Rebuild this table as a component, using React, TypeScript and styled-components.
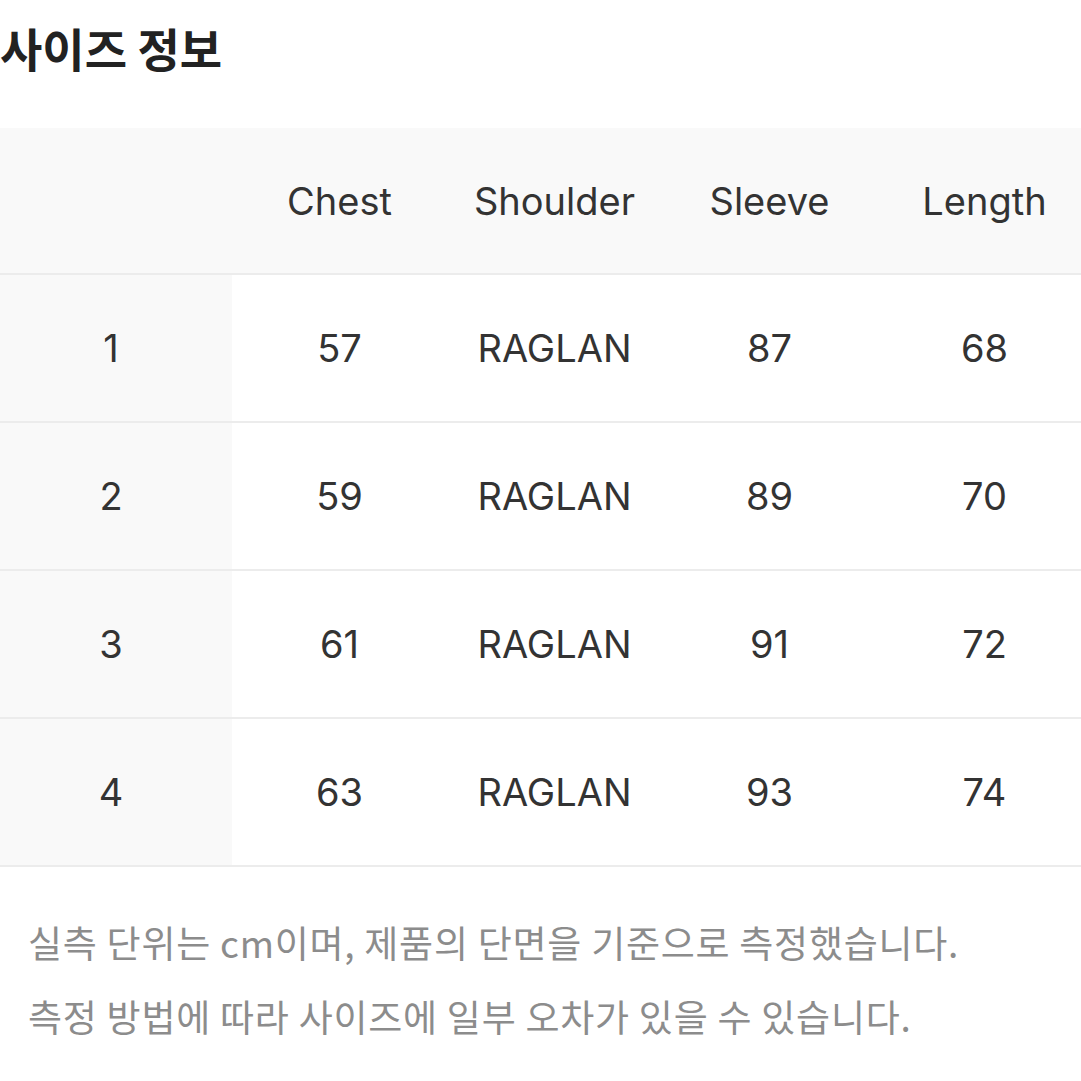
import styled, { createGlobalStyle } from "styled-components";

const GlobalStyle = createGlobalStyle`
  html, body {
    margin: 0;
    padding: 0;
    background: #ffffff;
    overflow: hidden;
  }
  body {
    font-family: Inter, "Noto Sans CJK KR", sans-serif;
  }
`;

const headers = ["", "Chest", "Shoulder", "Sleeve", "Length"];

const rows = [
  ["1", "57", "RAGLAN", "87", "68"],
  ["2", "59", "RAGLAN", "89", "70"],
  ["3", "61", "RAGLAN", "91", "72"],
  ["4", "63", "RAGLAN", "93", "74"],
];

const notes = [
  "실측 단위는 cm이며, 제품의 단면을 기준으로 측정했습니다.",
  "측정 방법에 따라 사이즈에 일부 오차가 있을 수 있습니다.",
];

function App() {
  return (
    <Page>
      <GlobalStyle />
      <Title>사이즈 정보</Title>
      <Table>
        <HeadRow>
          {headers.map((h, i) => (
            <Cell key={i}>{h}</Cell>
          ))}
        </HeadRow>
        {rows.map((row) => (
          <BodyRow key={row[0]}>
            {row.map((v, i) => (
              <Cell key={i} $label={i === 0}>
                {v}
              </Cell>
            ))}
          </BodyRow>
        ))}
      </Table>
      <Notes>
        {notes.map((n) => (
          <Note key={n}>{n}</Note>
        ))}
      </Notes>
    </Page>
  );
}
export default App;

const Page = styled.div`
  width: 1081px;
  height: 1081px;
  overflow: hidden;
`;

const Title = styled.h1`
  margin: 0;
  height: 128px;
  padding-top: 15px;
  box-sizing: border-box;
  font-family: "Noto Sans CJK KR", sans-serif;
  font-size: 46px;
  font-weight: 700;
  line-height: 64px;
  color: #222222;
`;

const Table = styled.div`
  margin-left: -10px;
  width: 1102px;
  border-bottom: 2px solid #ececec;
`;

const HeadRow = styled.div`
  display: grid;
  grid-template-columns: 242px repeat(4, 215px);
  height: 145px;
  background: #f9f9f9;
  border-bottom: 2px solid #ececec;
`;

const BodyRow = styled.div`
  display: grid;
  grid-template-columns: 242px repeat(4, 215px);
  height: 146px;
  & + & {
    border-top: 2px solid #ececec;
  }
`;

const Cell = styled.div<{ $label?: boolean }>`
  display: flex;
  align-items: center;
  justify-content: center;
  font-family: Inter, sans-serif;
  font-size: 38px;
  color: #333333;
  background: ${(p) => (p.$label ? "#f9f9f9" : "transparent")};
`;

const Notes = styled.div`
  padding: 38px 0 0 28px;
`;

const Note = styled.p`
  margin: 0;
  font-family: "Noto Sans CJK KR", sans-serif;
  font-size: 37px;
  line-height: 74px;
  color: #8c8c8c;
  letter-spacing: 0.75px;
  white-space: nowrap;
`;
